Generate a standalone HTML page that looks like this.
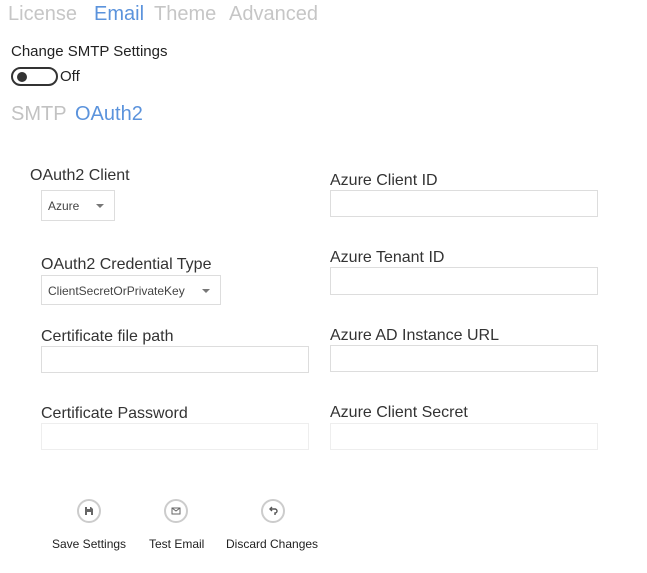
<!DOCTYPE html>
<html><head><style>
body{margin:0;width:647px;height:573px;background:#fff;font-family:"Segoe UI","Liberation Sans",sans-serif;color:#222;position:relative;overflow:hidden}
.a{position:absolute;white-space:nowrap}
.tab{font-size:20px;color:#c6c6c6;top:1px;line-height:26px}
.lbl{font-size:16px;color:#333;line-height:20px}
.in{position:absolute;border:1px solid #ddd;box-sizing:border-box;background:#fff}
.sel{position:absolute;border:1px solid #ddd;box-sizing:border-box;font-size:12px;color:#444;line-height:30px;padding-left:6px}
.sel:after{content:"";position:absolute;right:10px;top:13px;border-left:4px solid transparent;border-right:4px solid transparent;border-top:4px solid #777}
.c{position:absolute;width:24px;height:24px;border:2px solid #ccc;border-radius:50%;box-sizing:border-box}
.c svg{position:absolute;left:1px;top:1px}
.bl{font-size:12px;color:#222;top:537px}
</style></head><body>
<div class="a tab" style="left:8px">License</div>
<div class="a tab" style="left:94px;color:#5b93dc">Email</div>
<div class="a tab" style="left:154px">Theme</div>
<div class="a tab" style="left:229px">Advanced</div>
<div class="a" style="left:11px;top:43px;font-size:15px">Change SMTP Settings</div>
<div class="a" style="left:11px;top:67px;width:47px;height:19px;border:2px solid #333;border-radius:10px;box-sizing:border-box"><div style="position:absolute;left:4px;top:3px;width:10px;height:10px;border-radius:50%;background:#333"></div></div>
<div class="a" style="left:60px;top:68px;font-size:15px">Off</div>
<div class="a tab" style="left:11px;top:101px;color:#c2c2c2">SMTP</div>
<div class="a tab" style="left:75px;top:101px;color:#5b93dc">OAuth2</div>

<div class="a lbl" style="left:30px;top:166px">OAuth2 Client</div>
<div class="sel" style="left:41px;top:190px;width:74px;height:31px">Azure</div>
<div class="a lbl" style="left:41px;top:255px">OAuth2 Credential Type</div>
<div class="sel" style="left:41px;top:275px;width:180px;height:30px">ClientSecretOrPrivateKey</div>
<div class="a lbl" style="left:41px;top:327px">Certificate file path</div>
<div class="in" style="left:41px;top:346px;width:268px;height:27px"></div>
<div class="a lbl" style="left:41px;top:404px">Certificate Password</div>
<div class="in" style="left:41px;top:423px;width:268px;height:27px;border-color:#eee"></div>

<div class="a lbl" style="left:330px;top:171px">Azure Client ID</div>
<div class="in" style="left:330px;top:190px;width:268px;height:27px"></div>
<div class="a lbl" style="left:330px;top:248px">Azure Tenant ID</div>
<div class="in" style="left:330px;top:267px;width:268px;height:28px"></div>
<div class="a lbl" style="left:330px;top:326px">Azure AD Instance URL</div>
<div class="in" style="left:330px;top:345px;width:268px;height:27px"></div>
<div class="a lbl" style="left:330px;top:403px">Azure Client Secret</div>
<div class="in" style="left:330px;top:423px;width:268px;height:27px;border-color:#eee"></div>

<div class="c" style="left:77px;top:499px"><svg width="18" height="18" viewBox="0 0 18 18"><path d="M5 5h6l2 2v6H5z" fill="#666"/><rect x="7" y="5" width="3" height="2" fill="#fff"/><rect x="7" y="10" width="4" height="3" fill="#fff"/></svg></div>
<div class="c" style="left:164px;top:499px"><svg width="18" height="18" viewBox="0 0 18 18"><rect x="5" y="6" width="8" height="6" fill="none" stroke="#666"/><path d="M5 6l4 3 4-3" fill="none" stroke="#666"/></svg></div>
<div class="c" style="left:261px;top:499px"><svg width="18" height="18" viewBox="0 0 18 18"><path d="M7 7h4a2 2 0 0 1 0 4h0v2" fill="none" stroke="#555" stroke-width="1.4"/><path d="M8 5L6 7l2 2" fill="none" stroke="#555" stroke-width="1.4"/></svg></div>
<div class="a bl" style="left:52px">Save Settings</div>
<div class="a bl" style="left:149px">Test Email</div>
<div class="a bl" style="left:226px">Discard Changes</div>
</body></html>
